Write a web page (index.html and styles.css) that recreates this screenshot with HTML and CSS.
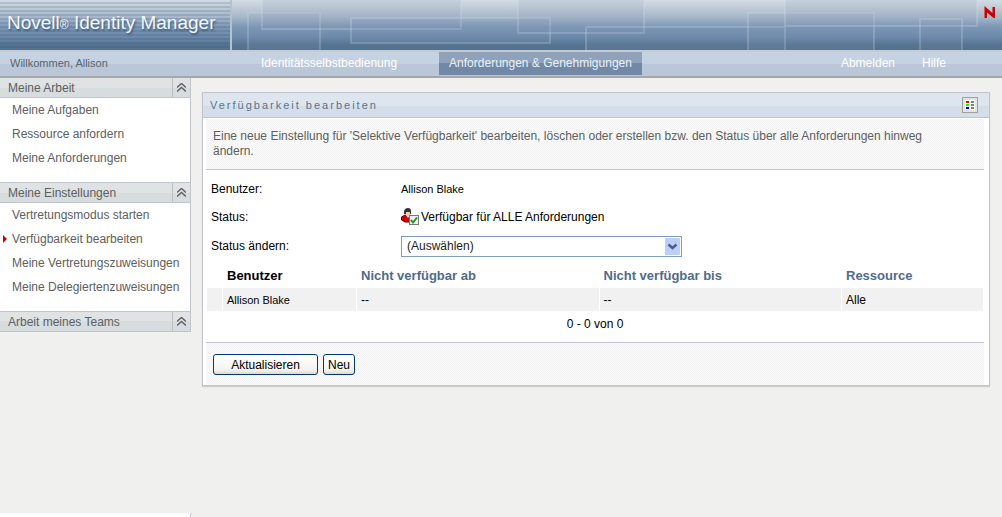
FILE: index.html
```html
<!DOCTYPE html>
<html lang="de">
<head>
    <meta charset="UTF-8">
    <meta name="viewport" content="width=device-width, initial-scale=1.0">
    <title>Novell Identity Manager</title>
    <link rel="stylesheet" href="styles.css">
</head>
<body>

    <!-- Banner -->
    <header class="banner">
        <svg class="banner-art" width="1002" height="50" viewBox="0 0 1002 50" aria-hidden="true">
            <g fill="#8a93b4" fill-opacity=".14" stroke="#d5e2ee" stroke-opacity=".24" stroke-width="2">
                <rect x="248" y="13" width="72" height="45"/>
                <rect x="262" y="-9" width="199" height="38"/>
                <rect x="351" y="18" width="199" height="25"/>
                <rect x="518" y="-9" width="126" height="42"/>
                <rect x="586" y="27" width="199" height="35"/>
                <rect x="748" y="13" width="126" height="45"/>
                <rect x="785" y="-9" width="192" height="35"/>
                <rect x="920" y="19" width="42" height="45"/>
            </g>
        </svg>
        <h1 class="product">Novell<span class="reg">®</span> Identity Manager</h1>
        <svg class="novell-n" width="12" height="13" viewBox="0 0 12 13" role="img" aria-label="Novell">
            <path d="M0.500 0L8.500 7V1H11V12H9.500L3 6.500V12H0.500Z" fill="#c00"/>
        </svg>
    </header>

    <!-- Navigation -->
    <div class="topbar">
        <span class="welcome">Willkommen, Allison</span>
        <nav class="tabs">
            <a href="#">Identitätsselbstbedienung</a>
            <a href="#" class="active">Anforderungen &amp; Genehmigungen</a>
        </nav>
        <nav class="links">
            <a href="#">Abmelden</a>
            <a href="#">Hilfe</a>
        </nav>
    </div>

    <div class="page">
        <aside class="sidebar">
            <h2 class="group">Meine Arbeit
                <button type="button" class="toggle" aria-label="Meine Arbeit einklappen">
                    <svg width="9" height="9" viewBox="0 0 9 9"><path d="M0 4.5L4.5 0.5L9 4.5M0 8.5L4.5 4.5L9 8.5"/></svg>
                </button>
            </h2>
            <ul class="menu">
                <li><a href="#">Meine Aufgaben</a></li>
                <li><a href="#">Ressource anfordern</a></li>
                <li><a href="#">Meine Anforderungen</a></li>
            </ul>
            <h2 class="group">Meine Einstellungen
                <button type="button" class="toggle" aria-label="Meine Einstellungen einklappen">
                    <svg width="9" height="9" viewBox="0 0 9 9"><path d="M0 4.5L4.5 0.5L9 4.5M0 8.5L4.5 4.5L9 8.5"/></svg>
                </button>
            </h2>
            <ul class="menu">
                <li><a href="#">Vertretungsmodus starten</a></li>
                <li class="current"><a href="#">Verfügbarkeit bearbeiten</a></li>
                <li><a href="#">Meine Vertretungszuweisungen</a></li>
                <li><a href="#">Meine Delegiertenzuweisungen</a></li>
            </ul>
            <h2 class="group">Arbeit meines Teams
                <button type="button" class="toggle" aria-label="Arbeit meines Teams einklappen">
                    <svg width="9" height="9" viewBox="0 0 9 9"><path d="M0 4.5L4.5 0.5L9 4.5M0 8.5L4.5 4.5L9 8.5"/></svg>
                </button>
            </h2>
            <div class="sidebar-foot"></div>
        </aside>

        <main class="content">
            <section class="portlet">
                <div class="portlet-head">
                    <h2>Verfügbarkeit bearbeiten</h2>
                    <button type="button" class="legend" aria-label="Legende">
                        <svg width="10" height="10" viewBox="0 0 10 10" shape-rendering="crispEdges">
                            <rect width="10" height="10" fill="#fff"/>
                            <rect x="1" y="1" width="3" height="2" fill="#f00"/>
                            <rect x="1" y="4" width="3" height="2" fill="#0f0"/>
                            <rect x="1" y="7" width="3" height="2" fill="#00f"/>
                            <path d="M6 1h3v2h-3zM6 4h3v2h-3zM6 7h3v2h-3z" fill="#808080"/>
                        </svg>
                    </button>
                </div>

                <form class="portlet-body">
                    <p class="intro">Eine neue Einstellung für 'Selektive Verfügbarkeit' bearbeiten, löschen oder erstellen bzw. den Status über alle Anforderungen hinweg ändern.</p>

                    <div class="fields">
                        <span>Benutzer:</span>
                        <span class="small">Allison Blake</span>
                        <span>Status:</span>
                        <span class="status">
                            <svg width="18" height="18" viewBox="0 0 18 18" aria-hidden="true">
                                <path d="M0.500 12V9L4 7H9L11 9V14H4Z" fill="#d00000" stroke="#500" stroke-width="1"/>
                                <path d="M5 7h4l-2 3z" fill="#fff"/>
                                <circle cx="7" cy="5" r="3" fill="#f0cdb4"/>
                                <path d="M3 6V3Q4 0 7 0T10 3V6H9V4H5V6Z" fill="#333"/>
                                <rect x="8.500" y="7.500" width="9" height="9" fill="#eee" stroke="#777"/>
                                <path d="M10 12L12 14.500L16 9.500" fill="none" stroke="#159a25" stroke-width="2"/>
                            </svg>
                            Verfügbar für ALLE Anforderungen
                        </span>
                        <label for="status">Status ändern:</label>
                        <span class="select-wrap">
                            <select id="status">
                                <option>(Auswählen)</option>
                            </select>
                            <svg class="arrow" width="15" height="17" viewBox="0 0 15 17" aria-hidden="true">
                                <rect width="15" height="17" rx="1" fill="#bccffa"/>
                                <path d="M3.500 6.500L7.500 10L11.500 6.500" fill="none" stroke="#4d6185" stroke-width="2.500"/>
                            </svg>
                        </span>
                    </div>

                    <table class="list">
                        <thead>
                            <tr>
                                <td class="pick"></td>
                                <th class="user">Benutzer</th>
                                <th><a href="#">Nicht verfügbar ab</a></th>
                                <th><a href="#">Nicht verfügbar bis</a></th>
                                <th class="resource"><a href="#">Ressource</a></th>
                            </tr>
                        </thead>
                        <tbody>
                            <tr>
                                <td></td>
                                <td class="small">Allison Blake</td>
                                <td>--</td>
                                <td>--</td>
                                <td>Alle</td>
                            </tr>
                        </tbody>
                    </table>
                    <p class="pager">0 - 0 von 0</p>

                    <div class="actions">
                        <button type="submit" class="btn wide">Aktualisieren</button>
                        <button type="button" class="btn">Neu</button>
                    </div>
                </form>
            </section>
        </main>
    </div>

</body>
</html>
```
FILE: styles.css
```css
* {
    box-sizing: border-box;
}
body {
    margin: 0;
    min-height: 100vh;
    display: flex;
    flex-direction: column;
    font-family: "Liberation Sans", Arial, sans-serif;
    font-size: 12px;
    color: #000;
    background-color: #f0f0ef;
}
h1, h2, p, ul {
    margin: 0;
    padding: 0;
    font-weight: normal;
}
a {
    color: inherit;
    text-decoration: none;
}
button {
    padding: 0;
    font-family: inherit;
    cursor: pointer;
}

/* Banner */
.banner {
    position: relative;
    display: flex;
    justify-content: space-between;
    height: 50px;
    overflow: hidden;
    background: linear-gradient(#d3dce5, #a7b7c9 34%, #7b98b6 54%, #6b89aa 74%, #557492 90%, #527190);
}
.banner-art {
    position: absolute;
    left: 0;
    top: 0;
}
.product {
    position: relative;
    width: 232px;
    padding-left: 7px;
    border-right: 2px solid #b4c1ce;
    font-size: 19px;
    line-height: 46px;
    color: #f4f7fa;
    white-space: nowrap;
    text-shadow: 1px 2px 2px #3d5878;
    background: repeating-linear-gradient(transparent 0 2px, rgba(50, 80, 115, 0.18) 2px 4px);
}
.reg {
    font-size: 12px;
}
.novell-n {
    position: relative;
    margin: 6px 6px 0 0;
}

/* Navigation */
.topbar {
    display: flex;
    align-items: stretch;
    height: 28px;
    border-top: 2px solid #c6ccd4;
    border-bottom: 2px solid #a5a7a8;
    background: linear-gradient(#c5d2e1 0 48%, #b9c7d9 48%);
    line-height: 22px;
    color: #fff;
}
.welcome {
    width: 251px;
    padding-left: 10px;
    font-size: 11px;
    color: #58636c;
}
.tabs {
    display: flex;
    gap: 32px;
}
.tabs a {
    padding: 0 10px;
}
.tabs .active {
    margin-bottom: 1px;
    color: #e8f0f8;
    background: linear-gradient(#90a2b9 0 46%, #7189a6 46%);
}
.links {
    display: flex;
    gap: 27px;
    margin-left: auto;
    padding-right: 56px;
}

.page {
    display: flex;
    flex: 1;
}

/* Sidebar */
.sidebar {
    display: flex;
    flex-direction: column;
    flex: none;
    width: 191px;
    color: #5c6060;
}
.group {
    display: flex;
    justify-content: space-between;
    height: 20px;
    padding-left: 8px;
    border-right: 1px solid #c1c4ca;
    border-bottom: 1px solid #c1c4ca;
    background: linear-gradient(#dfe3e4 0 50%, #d7dcde 50%);
    font-size: 12px;
    line-height: 20px;
}
.menu + .group {
    height: 21px;
    border-top: 1px solid #c1c4ca;
}
.toggle {
    display: flex;
    align-items: center;
    justify-content: center;
    width: 18px;
    border: none;
    border-left: 1px solid #bcc0bc;
    background: none;
}
.toggle path {
    fill: none;
    stroke: #606466;
    stroke-width: 1.5;
}
.menu {
    padding-bottom: 12px;
    border-right: 1px solid #c1c4ca;
    background-color: #fff;
    list-style: none;
    line-height: 24px;
}
.menu li {
    position: relative;
    padding-left: 12px;
    white-space: nowrap;
}
.menu .current::before {
    content: "";
    position: absolute;
    left: 3px;
    top: 8px;
    border: 4px solid transparent;
    border-left-color: #c00;
    border-right: none;
}
.sidebar-foot {
    height: 4px;
    margin-top: auto;
    border-right: 1px solid #c1c4ca;
    background-color: #fff;
}

/* Portlet */
.content {
    flex: 1;
    padding: 14px 12px 14px 11px;
}
.portlet {
    border: 1px solid #c1c4ca;
    background-color: #fff;
    box-shadow: 0 1px 1px #ccc;
}
.portlet-head {
    display: flex;
    justify-content: space-between;
    align-items: center;
    height: 25px;
    padding: 0 11px 0 7px;
    border-bottom: 1px solid #c1c4ca;
    background: linear-gradient(#dde6ef 0 56%, #d4dee8 56%);
}
.portlet-head h2 {
    font-size: 11px;
    letter-spacing: 2px;
    color: #587392;
}
.legend {
    display: flex;
    align-items: center;
    justify-content: center;
    width: 16px;
    height: 16px;
    border: 1px solid #a0a09c;
    background-color: #e4e4e0;
}
.portlet-body {
    padding: 1px 5px 0 3px;
}
.intro, .actions {
    background: repeating-conic-gradient(#f3f3f3 0 25%, #fafafa 0 50%) 0 0 / 2px 2px;
}
.intro {
    padding: 10px 36px 10px 7px;
    border-bottom: 1px solid #c1c4ca;
    line-height: 15px;
    color: #5c6060;
}
.fields {
    display: grid;
    grid-template-columns: 190px 1fr;
    grid-template-rows: 27px 29px 30px;
    align-items: center;
    padding: 5px 0 2px 5px;
}
.small {
    font-size: 11px;
}
.status {
    display: flex;
    align-items: center;
    gap: 2px;
}
.select-wrap {
    position: relative;
    width: 281px;
}
.select-wrap select {
    display: block;
    width: 100%;
    height: 21px;
    padding: 0 20px 0 5px;
    border: 1px solid #7f9db9;
    border-radius: 0;
    appearance: none;
    background-color: #fff;
    font: 12px "Liberation Sans", Arial, sans-serif;
    color: #222;
}
.arrow {
    position: absolute;
    right: 2px;
    top: 2px;
    pointer-events: none;
}

/* Table */
.list {
    width: 100%;
    border-collapse: separate;
    border-spacing: 1px 0;
    table-layout: fixed;
}
.list th, .list td {
    height: 23px;
    padding: 0 4px;
    text-align: left;
}
.list th {
    height: 25px;
    font-size: 13px;
}
.list th a {
    color: #4f6b8c;
}
.list tbody td {
    background-color: #f1f1f1;
}
.list .pick {
    width: 15px;
}
.list .user {
    width: 133px;
}
.list .resource {
    width: 141px;
}
.pager {
    padding-bottom: 4px;
    line-height: 27px;
    text-align: center;
}

.actions {
    display: flex;
    gap: 5px;
    padding: 11px 7px 10px;
    border-top: 1px solid #c1c4ca;
}
.btn {
    height: 21px;
    padding: 0 4px;
    border: 1px solid #003c74;
    border-radius: 3px;
    background: linear-gradient(#fff, #f3f3ee 80%, #dcd8cf);
    font-size: 12px;
    color: #000;
}
.btn.wide {
    width: 105px;
}
```
